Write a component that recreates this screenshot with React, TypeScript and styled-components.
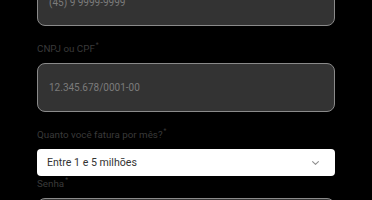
import React from 'react';
import styled, {createGlobalStyle} from 'styled-components';

const GlobalStyle = createGlobalStyle`
  html, body {
    margin: 0;
    padding: 0;
    background: #000;
    overflow: hidden;
  }
  body {
    font-family: Roboto, "Liberation Sans", sans-serif;
  }
`

const Form = styled.div`
  width: 298px;
  margin: -21px 0 0 37px;
  display: flex;
  flex-direction: column;
`

const Label = styled.label`
  display: block;
  font-size: 9.8px;
  line-height: 14px;
  height: 14px;
  color: #3a3a3a;
  margin-bottom: 7px;
  sup {
    font-size: 6.5px;
    line-height: 0;
    position: relative;
    top: -1px;
    margin-left: 1px;
  }
`

const Input = styled.div<{ $last?: boolean; $height?: number }>`
  box-sizing: border-box;
  height: ${p => p.$height ?? 49}px;
  border: 1px solid #8a8a8a;
  border-radius: 8px;
  background: #333;
  padding: 0 11px;
  display: flex;
  align-items: center;
  font-size: 10px;
  color: #7b7b7b;
  margin-bottom: ${p => (p.$last ? 0 : 16)}px;
`

const Select = styled.div`
  box-sizing: border-box;
  height: 27px;
  border-radius: 4px;
  background: #fff;
  padding: 0 16px 0 10px;
  display: flex;
  align-items: center;
  justify-content: space-between;
  font-size: 10.6px;
  color: #333;
  margin-bottom: 1px;
`

const Chevron = () => (
  <svg width="7" height="4" viewBox="0 0 7 4" fill="none">
    <path d="M0.6 0.6L3.5 3.3L6.4 0.6" stroke="#8f8f8f" strokeWidth="1.1" strokeLinecap="round" strokeLinejoin="round"/>
  </svg>
)

export default function App() {
  return (
    <>
      <GlobalStyle/>
      <Form>
        <Input $height={47}>(45) 9 9999-9999</Input>
        <Label>CNPJ ou CPF<sup>*</sup></Label>
        <Input>12.345.678/0001-00</Input>
        <Label>Quanto você fatura por mês?<sup>*</sup></Label>
        <Select>
          <span>Entre 1 e 5 milhões</span>
          <Chevron/>
        </Select>
        <Label>Senha<sup>*</sup></Label>
        <Input $last/>
      </Form>
    </>
  );
}
